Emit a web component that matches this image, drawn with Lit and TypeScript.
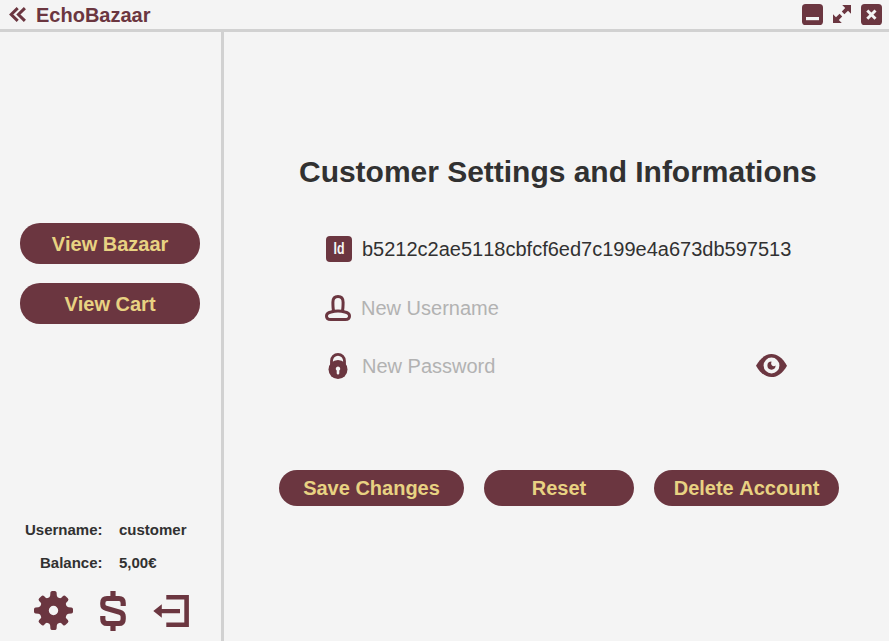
import { LitElement, html, css, svg } from "lit";
import { customElement, property } from "lit/decorators.js";

const icons: Record<string, { w: number; h: number; body: unknown }> = {
  back: {
    w: 18, h: 16,
    body: svg`<path fill="none" stroke="currentColor" stroke-width="3" d="M8.700 1.100 2.200 7.500l6.500 6.400M15.900 1.100 9.400 7.500l6.500 6.400"/>`,
  },
  minimize: {
    w: 21, h: 21,
    body: svg`<rect width="21" height="21" rx="3.600" fill="currentColor"/><rect x="4" y="13" width="13" height="3.200" fill="#f4f4f4"/>`,
  },
  expand: {
    w: 18, h: 18,
    body: svg`<path fill="currentColor" d="M9.200 0H18v8.800l-3-3-3.600 3.400-2.600-2.600L12.200 3zM0 18V9.200l3 3 3.600-3.400 2.600 2.600L5.800 15l3 3z"/>`,
  },
  close: {
    w: 21, h: 21,
    body: svg`<rect width="21" height="21" rx="3.600" fill="currentColor"/><path d="M6.300 6.500l8.200 8.200M14.500 6.500l-8.200 8.200" stroke="#f4f4f4" stroke-width="3"/>`,
  },
  gear: {
    w: 39, h: 39,
    body: svg`<g fill="currentColor">
      ${[0, 90, 180, 270].map(
        (a) => svg`<path transform="rotate(${a} 19.500 19.500)" d="M13 8.200Q16 7 16.200 4.500L16.400 1.600Q16.600 0 18.200 0h2.600q1.600 0 1.800 1.600l.2 2.900Q23 7 26 8.200z"/>`
      )}
      ${[45, 135, 225, 315].map(
        (a) => svg`<path transform="rotate(${a} 19.500 19.500)" d="M13.500 8.200Q16 7 16 4.500V2.600Q16.200.8 18 .8h3q1.800 0 2 1.800V4.500Q23 7 25.500 8.200z"/>`
      )}
      <path fill-rule="evenodd" d="M19.500 5.700a13.800 13.800 0 1 0 0 27.600 13.800 13.800 0 0 0 0-27.600zm0 9.100a4.700 4.700 0 1 1 0 9.400 4.700 4.700 0 0 1 0-9.400z"/></g>`,
  },
  dollar: {
    w: 26, h: 40,
    body: svg`<path fill="none" stroke="currentColor" stroke-width="5.200" d="M13 0v7M13 33v7M23.200 15V12Q23.200 7.500 19 7.500H7Q2.800 7.500 2.800 12V13.300Q2.800 16.400 6 17.300L19.800 21.300Q23.200 22.400 23.200 25.500V28Q23.200 32.500 19 32.500H7Q2.800 32.500 2.800 28V25"/>`,
  },
  logout: {
    w: 36, h: 32,
    body: svg`<path fill="none" stroke="currentColor" stroke-width="4.600" d="M13.300 2.300H33.600V29.700H13.300"/><path fill="currentColor" d="M.3 16 8.800 9.200V14H27v4.200H8.800v4.600z"/>`,
  },
  id: {
    w: 26, h: 26,
    body: svg`<rect width="26" height="26" rx="4" fill="currentColor"/><text x="13" y="18" text-anchor="middle" textLength="11" lengthAdjust="spacingAndGlyphs" fill="#f4f4f4" font-family="Liberation Sans, sans-serif" font-weight="700" font-size="16">Id</text>`,
  },
  user: {
    w: 26, h: 26,
    body: svg`<g fill="none" stroke="currentColor" stroke-width="3"><path d="M8.600 16C7.900 13.500 7.900 10.500 7.900 7.300 7.900 3.600 9.800 1.600 13 1.600s5.100 2 5.100 5.700c0 3.200 0 6.200-.7 8.700"/><path d="M6 17Q13 14.900 20 17C23 17.700 24.500 18.900 24.500 20.900S23 24.500 20.300 24.500H5.700C3 24.500 1.500 22.900 1.500 20.900S3 17.700 6 17z"/></g>`,
  },
  lock: {
    w: 20, h: 26,
    body: svg`<path fill="none" stroke="currentColor" stroke-width="2.800" d="M3.500 13V8a6.500 6.600 0 0 1 13 0V13"/><circle cx="10" cy="16.500" r="9.500" fill="currentColor"/><path fill="#f4f4f4" d="M10 13.500a2.200 2.200 0 0 1 1.300 4V20.300a1.300 1.300 0 0 1-2.600 0V17.500a2.200 2.200 0 0 1 1.300-4z"/>`,
  },
  eye: {
    w: 31, h: 24,
    body: svg`<path fill="currentColor" d="M0 11.700C4.500 4 9.500 0 15.500 0S26.500 4 31 11.700c-4.500 7.800-9.500 11.300-15.500 11.300S4.500 19.500 0 11.700z"/><circle cx="15.500" cy="11.500" r="7.900" fill="#f4f4f4"/><path fill="currentColor" d="M15.500 7.500A4.100 4.100 0 1 0 19.600 11.600Q17.500 12.800 16 11.400T15.500 7.500z"/>`,
  },
};

@customElement("app-icon")
class AppIcon extends LitElement {
  @property() name = "back";
  static styles = css`
    :host { display: block; flex: none; color: #6b3640; }
    svg { display: block; overflow: visible; }
  `;
  render() {
    const i = icons[this.name];
    return html`<svg width=${i.w} height=${i.h} viewBox="0 0 ${i.w} ${i.h}">${i.body}</svg>`;
  }
}

@customElement("app-root")
class AppRoot extends LitElement {
  static styles = css`
    :host {
      display: flex; flex-direction: column; box-sizing: border-box;
      width: 889px; height: 641px; overflow: hidden;
      background: #f4f4f4; color: #313131;
      font-family: "Liberation Sans", Arial, sans-serif; font-size: 20px;
      font-kerning: none;
    }
    * { box-sizing: border-box; }
    header {
      flex: none; height: 32px; border-bottom: 3px solid #d1d1d1;
      display: flex; align-items: flex-start; padding: 4px 7px 0 9px;
    }
    .back { margin-top: 3px; }
    .brand { margin: 0 auto 0 9px; font-weight: 700; line-height: 23px; color: #6b3640; }
    .expand { margin: 1px 10px 0; }
    .body { flex: 1; display: flex; min-height: 0; }
    aside {
      width: 224px; flex: none; border-right: 3px solid #d1d1d1;
      display: flex; flex-direction: column; padding: 191px 0 11px;
    }
    button {
      display: block; border: 0; padding: 0; background: #6b3640; color: #e8d282;
      font: 700 20px "Liberation Sans", Arial, sans-serif; font-kerning: none;
    }
    nav { display: flex; flex-direction: column; gap: 19px; padding-left: 20px; }
    nav button { width: 180px; height: 41px; border-radius: 20px; padding-top: 2px; }
    dl {
      display: grid; grid-template-columns: 102.500px auto; column-gap: 16.500px;
      margin: auto 0 12px; font-size: 15px; font-weight: 700; line-height: 33px;
    }
    dt { text-align: right; }
    dd { margin: 0; }
    .tools { display: flex; align-items: flex-start; height: 39px; padding-left: 34px; }
    .dollar { margin: 0 27px; }
    .logout { margin-top: 4px; }
    main { flex: 1; padding: 120px 0 0 55px; }
    h1 { margin: 0 0 0 20px; font-size: 30px; line-height: 40px; letter-spacing: -0.020px; white-space: nowrap; }
    .fields { padding: 28px 0 0 46px; }
    .row { display: flex; align-items: center; height: 58px; width: 466px; }
    .identity { padding-left: 1px; height: 59px; padding-bottom: 1px; }
    .row app-icon[name="lock"] { margin: 0 3px; }
    .text { margin-left: 10px; line-height: 23px; }
    .password { margin-left: 11px; }
    .hint { color: #b2b2b2; }
    .eye { margin-left: auto; margin-right: 4px; }
    .actions { display: flex; gap: 20px; margin-top: 75px; }
    .actions button { height: 36px; width: 185px; border-radius: 18px; }
    .actions .narrow { width: 150px; }
  `;
  render() {
    return html`
      <header>
        <app-icon class="back" name="back"></app-icon>
        <div class="brand">EchoBazaar</div>
        <app-icon name="minimize"></app-icon>
        <app-icon class="expand" name="expand"></app-icon>
        <app-icon name="close"></app-icon>
      </header>
      <div class="body">
        <aside>
          <nav><button>View Bazaar</button><button>View Cart</button></nav>
          <dl><dt>Username:</dt><dd>customer</dd><dt>Balance:</dt><dd>5,00€</dd></dl>
          <div class="tools">
            <app-icon name="gear"></app-icon>
            <app-icon class="dollar" name="dollar"></app-icon>
            <app-icon class="logout" name="logout"></app-icon>
          </div>
        </aside>
        <main>
          <h1>Customer Settings and Informations</h1>
          <div class="fields">
            <div class="row identity"><app-icon name="id"></app-icon><span class="text">b5212c2ae5118cbfcf6ed7c199e4a673db597513</span></div>
            <div class="row"><app-icon name="user"></app-icon><span class="text hint">New Username</span></div>
            <div class="row"><app-icon name="lock"></app-icon><span class="text password hint">New Password</span><app-icon class="eye" name="eye"></app-icon></div>
          </div>
          <div class="actions">
            <button>Save Changes</button><button class="narrow">Reset</button><button>Delete Account</button>
          </div>
        </main>
      </div>
    `;
  }
}
